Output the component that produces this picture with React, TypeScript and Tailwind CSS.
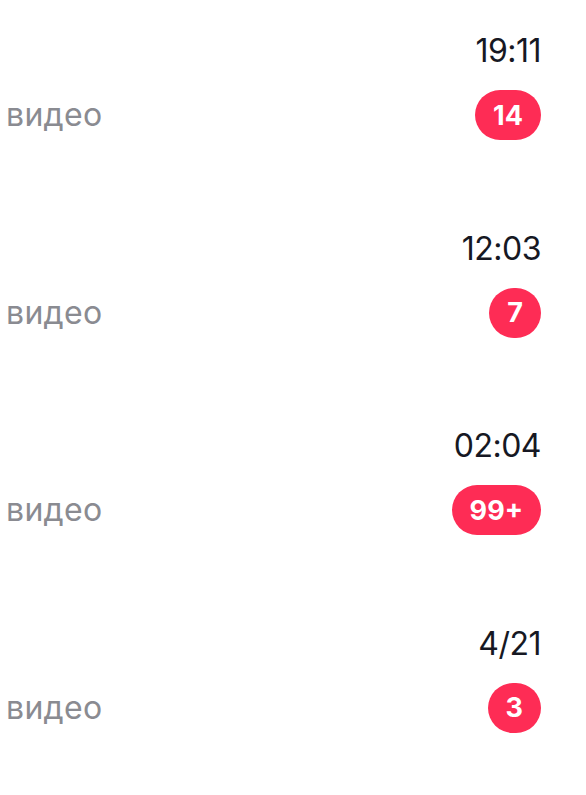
export default function App() {
  const rows = [
    { time: "19:11", count: "14" },
    { time: "12:03", count: "7" },
    { time: "02:04", count: "99+" },
    { time: "4/21", count: "3" },
  ];

  return (
    <div className="w-[586px] h-[795px] bg-white overflow-hidden font-['Inter',sans-serif]">
      {rows.map((row, i) => (
        <div key={i} className="h-[197.5px] pt-[35px] pl-[6px] pr-[45px] flex flex-col">
          <div className="flex justify-end">
            <span className="text-[32px] leading-none text-[#161823] tracking-[-0.5px]">
              {row.time}
            </span>
          </div>
          <div className="mt-[23px] flex items-center justify-between">
            <span className="text-[32px] leading-none text-[#8a8b91] tracking-[0.3px]">видео</span>
            <span className="h-[50px] min-w-[51px] px-[18px] rounded-full bg-[#fe2c55] text-white text-[27px] font-bold flex items-center justify-center leading-none">
              {row.count}
            </span>
          </div>
        </div>
      ))}
    </div>
  );
}
